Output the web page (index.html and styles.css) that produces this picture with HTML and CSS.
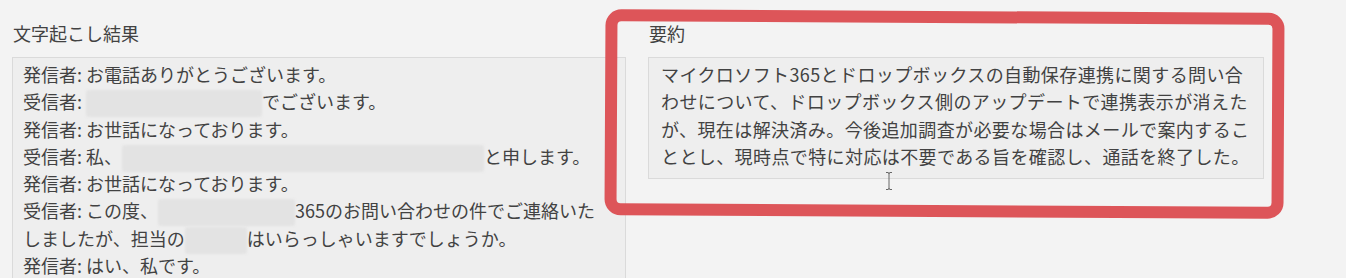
FILE: index.html
```html
<!DOCTYPE html>
<html lang="ja">
<head>
<meta charset="utf-8">
<title>文字起こし結果</title>
<link rel="stylesheet" href="styles.css">
</head>
<body>
<div class="page">
  <section class="col col-left">
    <div class="label">文字起こし結果</div>
    <div class="box transcript">
      <div class="line">発信者: お電話ありがとうございます。</div>
      <div class="line">受信者: <span class="blur" style="width:176px"></span>でございます。</div>
      <div class="line">発信者: お世話になっております。</div>
      <div class="line">受信者: 私、<span class="blur" style="width:362px"></span>と申します。</div>
      <div class="line">発信者: お世話になっております。</div>
      <div class="line">受信者: この度、<span class="blur" style="width:137px"></span>365のお問い合わせの件でご連絡いた</div>
      <div class="line">しましたが、担当の<span class="blur" style="width:62px"></span>はいらっしゃいますでしょうか。</div>
      <div class="line">発信者: はい、私です。</div>
    </div>
  </section>
  <section class="col col-right">
    <div class="label">要約</div>
    <div class="box summary">マイクロソフト365とドロップボックスの自動保存連携に関する問い合わせについて、ドロップボックス側のアップデートで連携表示が消えたが、現在は解決済み。今後追加調査が必要な場合はメールで案内することとし、現時点で特に対応は不要である旨を確認し、通話を終了した。</div>
  </section>
</div>
<div class="highlight"></div>
<svg class="cursor" width="10" height="20" viewBox="0 0 10 20">
  <path d="M2 1.5 H4 Q5 1.5 5 3 V17 Q5 18.5 4 18.5 H2 M8 1.5 H6 Q5 1.5 5 3 M5 17 Q5 18.5 6 18.5 H8" fill="none" stroke="#666" stroke-width="1"/>
</svg>
</body>
</html>
```

FILE: styles.css
```css
html, body {
  margin: 0;
  padding: 0;
}
body {
  background: #f3f3f3;
  color: #424242;
  font-family: "Noto Sans CJK JP", "Noto Sans", sans-serif;
  font-size: 18px;
  width: 1346px;
  height: 278px;
  overflow: hidden;
  position: relative;
}
.page {
  display: flex;
  gap: 22px;
  padding: 21px 0 0 12px;
}
.col-left {
  width: 614px;
}
.col-right {
  width: 616px;
}
.label {
  line-height: 24px;
  height: 24px;
  margin-bottom: 12px;
  padding-left: 1px;
}
.box {
  background: #eeeeee;
  border: 1px solid #dadada;
  box-sizing: border-box;
}
.transcript {
  height: 221px;
  overflow: hidden;
  border-bottom: none;
  padding: 3px 10px 0;
  line-height: 27.3px;
}
.line {
  white-space: nowrap;
  height: 27.3px;
}
.blur {
  display: inline-block;
  height: 27px;
  vertical-align: -8px;
  background: #e3e3e3;
  border-radius: 3px;
  filter: blur(1px);
}
.summary {
  padding: 3px 10px 8px 12px;
  line-height: 27.3px;
  letter-spacing: 0.4px;
}
.highlight {
  position: absolute;
  left: 605px;
  top: 11px;
  width: 679px;
  height: 206px;
  box-sizing: border-box;
  border: 12px solid #dd5559;
  border-radius: 16px;
  transform: rotate(0.3deg);
  pointer-events: none;
}
.cursor {
  position: absolute;
  left: 884px;
  top: 171px;
}
```
